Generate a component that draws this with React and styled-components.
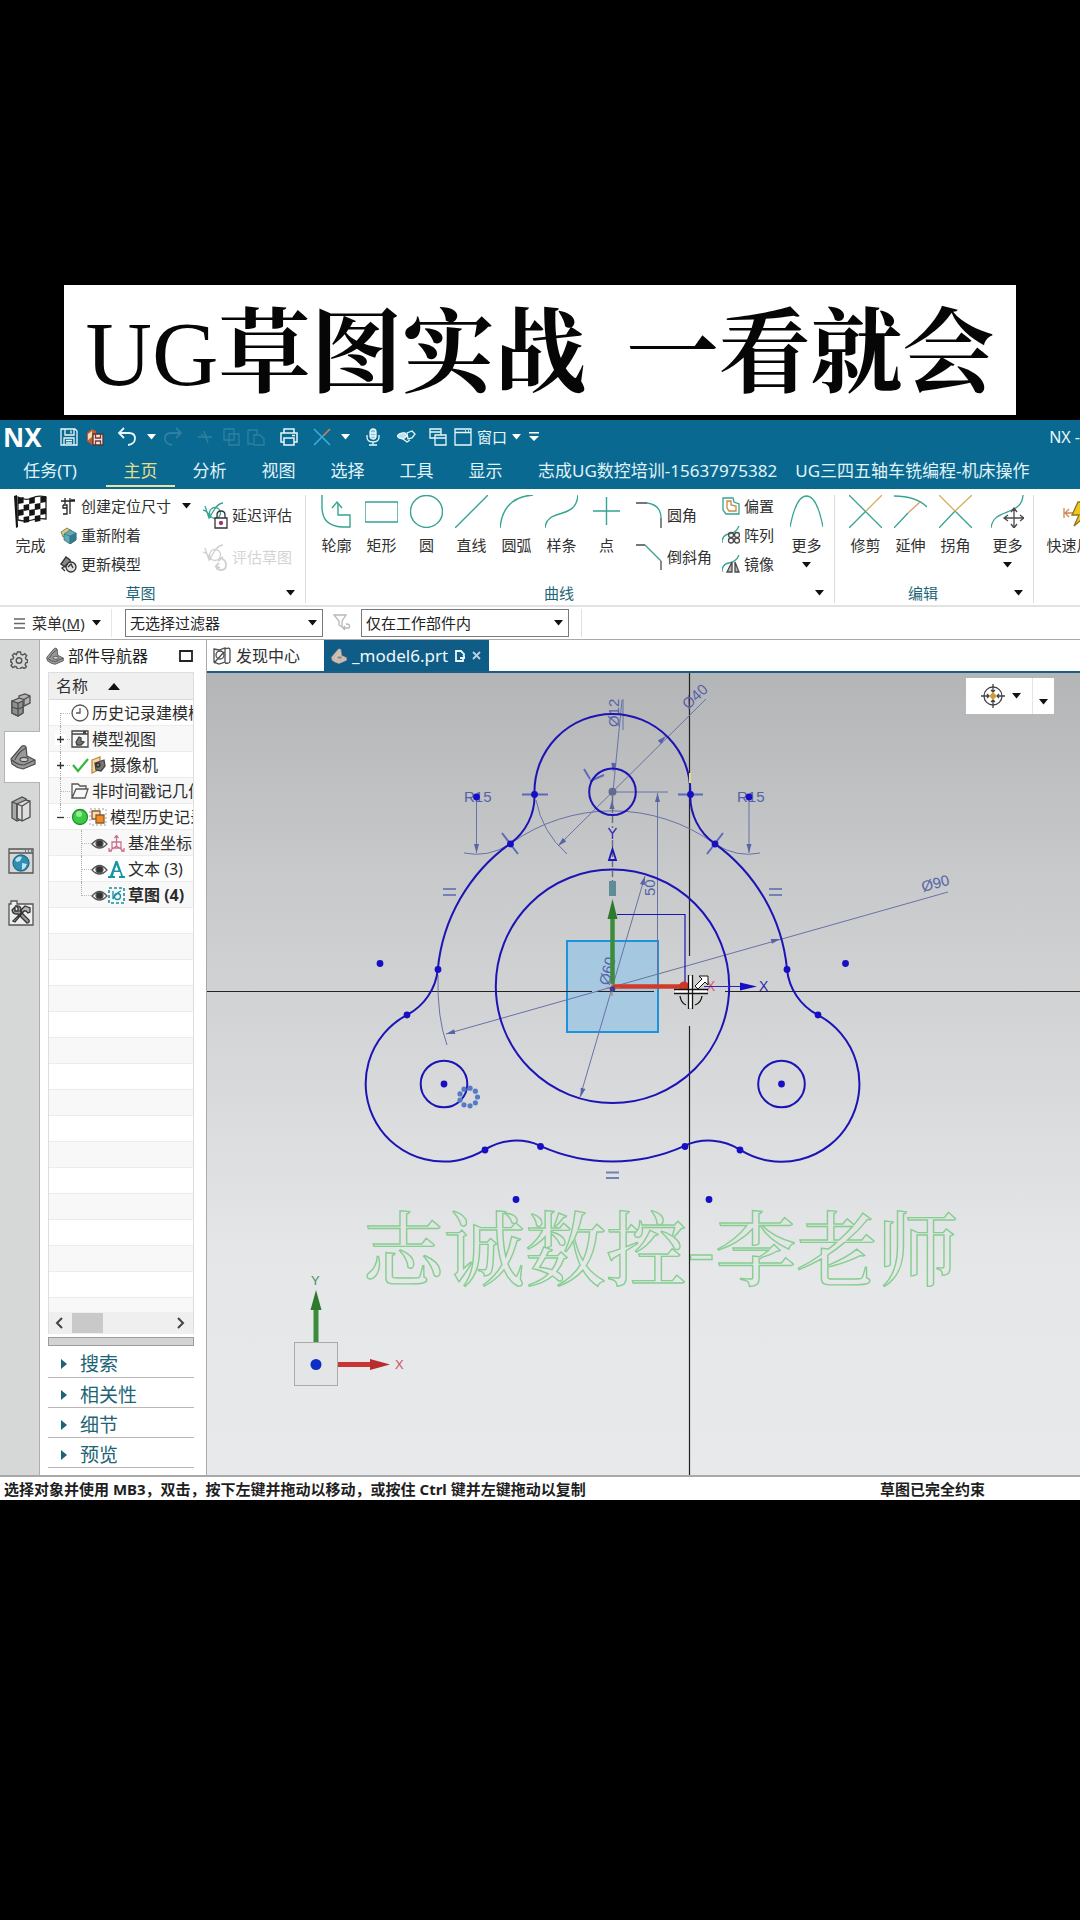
import React from "react";
import styled, { createGlobalStyle, css } from "styled-components";

const sans = `"Noto Sans", "Noto Sans CJK SC", sans-serif`;
const teal = "#1d6477";

const Global = createGlobalStyle`
  *, *::before, *::after { box-sizing: border-box; }
  html, body { margin: 0; background: #000; }
  body { font-family: ${sans}; font-size: 15px; line-height: 20px; color: #303030; }
  button, select { font: inherit; color: inherit; }
  button { margin: 0; padding: 0; border: 0; background: none; white-space: nowrap; }
  h1, h2, ul { margin: 0; padding: 0; font-weight: normal; }
  ul { list-style: none; }
  svg { display: block; flex: none; }
`;

/* ---------- page ---------- */
const Page = styled.div`
  min-height: 100vh;
  padding-top: 285px;
  background: #000;
  overflow: hidden;
`;
const Banner = styled.h1`
  display: flex;
  justify-content: center;
  align-items: center;
  gap: 40px;
  height: 130px;
  margin: 0 64px 5px;
  padding-top: 8px;
  background: #fff;
  color: #060606;
  white-space: nowrap;
  font: 700 92px/122px "Liberation Serif", "Noto Serif CJK SC", "Noto Sans CJK SC", serif;
`;
const BannerLatin = styled.span`
  font-weight: 400;
`;
const Window = styled.main`
  display: flex;
  flex-direction: column;
  background: #fff;
  overflow: hidden;
`;

/* ---------- header ---------- */
const Header = styled.header`
  height: 69px;
  background: #0a6991;
  color: #e9f7fb;
  overflow: hidden;
`;
const TitleBar = styled.div`
  display: flex;
  align-items: center;
  height: 33px;
`;
const Brand = styled.strong`
  width: 56px;
  padding-left: 3px;
  font-size: 26px;
  line-height: 32px;
  color: #fff;
`;
const QuickButton = styled.button`
  display: flex;
  justify-content: center;
  align-items: center;
  gap: 5px;
  width: ${(p) => (p.$w ? `${p.$w}px` : "auto")};
  height: 30px;
  opacity: ${(p) => (p.disabled ? 0.16 : 1)};
  color: inherit;
`;
const AppName = styled.span`
  flex: none;
  margin-left: auto;
  white-space: nowrap;
  font-size: 16px;
`;
const Tabs = styled.nav`
  display: flex;
  height: 36px;
`;
const Tab = styled.button`
  width: ${(p) => (p.$wide ? "auto" : p.$first ? "106px" : "69px")};
  padding: ${(p) => (p.$wide ? "3px 0 0 18px" : p.$first ? "3px 6px 0 0" : "3px 0 0")};
  height: 34px;
  font-size: 17px;
  line-height: 29px;
  color: ${(p) => (p.$on ? "#e6dc8c" : "#e0f3f8")};
  border-bottom: 2px solid ${(p) => (p.$on ? "#e8e4a4" : "transparent")};
`;

/* ---------- ribbon ---------- */
const Ribbon = styled.div`
  display: flex;
  height: 118px;
  padding-top: 6px;
  border-bottom: 2px solid #e2e2e2;
  overflow: hidden;
`;
const Group = styled.section`
  flex: none;
  display: flex;
  flex-direction: column;
  justify-content: space-between;
  width: ${(p) => (p.$w ? `${p.$w}px` : "auto")};
  padding-left: 8px;
  border-right: 1px solid #dcdcdc;
  margin-bottom: 2px;
`;
const Tools = styled.div`
  display: flex;
  align-items: flex-start;
`;
const Caption = styled.h2`
  position: relative;
  margin-left: -8px;
  text-align: center;
  font-size: 15px;
  line-height: 20px;
  color: ${teal};
  padding-right: ${(p) => p.$shift || 0}px;
`;
const Launcher = styled.button`
  position: absolute;
  right: 10px;
  top: 7px;
`;
const BigTool = styled.button`
  display: flex;
  flex-direction: column;
  align-items: center;
  width: 45px;
  flex: none;
  gap: 7px;
  line-height: 20px;
  margin-left: ${(p) => (p.$gap ? p.$gap : 0)}px;
`;
const Stack = styled.div`
  display: flex;
  flex-direction: column;
  flex: none;
  padding-left: ${(p) => p.$pl}px;
  padding-top: ${(p) => (p.$loose ? 10 : 1)}px;
  gap: ${(p) => (p.$loose ? 22 : 9)}px;
  width: ${(p) => p.$w}px;
`;
const SmallTool = styled.button`
  display: flex;
  align-items: center;
  gap: 4px;
  height: 20px;
  opacity: ${(p) => (p.disabled ? 0.45 : 1)};
  color: ${(p) => (p.disabled ? "#a0a0a0" : "#303030")};
  & > svg:last-child:not(:first-child) { margin-left: 7px; }
`;

/* ---------- filter bar ---------- */
const FilterBar = styled.div`
  display: flex;
  align-items: center;
  height: 33px;
  border-bottom: 1px solid #aaa;
`;
const MenuButton = styled.button`
  display: flex;
  align-items: center;
  gap: 7px;
  width: 112px;
  height: 28px;
  padding-left: 14px;
  border-right: 1px solid #e6e6e6;
`;
const Pick = styled.label`
  display: grid;
  align-items: center;
  width: ${(p) => p.$w}px;
  margin-left: ${(p) => p.$ml}px;
  & > * { grid-area: 1 / 1; }
  & > svg { justify-self: end; margin-right: 6px; pointer-events: none; }
`;
const Select = styled.select`
  appearance: none;
  width: 100%;
  height: 28px;
  padding: 0 20px 0 4px;
  border: 1px solid #7a7a7a;
  border-radius: 0;
  background: #fff;
  color: #222;
`;
const BarEnd = styled.span`
  width: 1px;
  height: 28px;
  margin-left: 12px;
  background: #e0e0e0;
`;

/* ---------- workspace ---------- */
const Workspace = styled.div`
  display: flex;
  min-height: 0;
`;
const Rail = styled.nav`
  flex: none;
  width: 40px;
  background: #d6d7d7;
  border-right: 1px solid #aeaeae;
`;
const RailButton = styled.button`
  display: flex;
  justify-content: center;
  align-items: center;
  width: 36px;
  height: ${(p) => (p.$short ? 39 : 52)}px;
  margin-left: ${(p) => (p.$short ? 1 : 4)}px;
  padding-right: ${(p) => (p.$on || p.$short ? 0 : 2)}px;
  ${(p) =>
    p.$on &&
    css`
      background: #fff;
      border: 1px solid #b5b5b5;
      border-right: 0;
    `}
`;
const Panel = styled.aside`
  flex: none;
  display: flex;
  flex-direction: column;
  width: 167px;
  padding: 0 12px 7px 8px;
  border-right: 1px solid #aaa;
  background: #fff;
`;
const PanelHead = styled.div`
  display: flex;
  align-items: center;
  gap: 4px;
  height: 32px;
  margin: 0 1px 0 -2px;
  font-size: 16px;
  color: #222;
  white-space: nowrap;
  & > svg:last-child { margin-left: auto; }
`;
const Tree = styled.div`
  display: flex;
  flex-direction: column;
  flex: 1;
  border: 1px solid #dedede;
  border-bottom: 0;
  overflow: hidden;
`;
const TreeHead = styled.button`
  display: flex;
  align-items: center;
  gap: 20px;
  height: 27px;
  padding-left: 7px;
  background: #f0f0f0;
  border-bottom: 1px solid #dadada;
  font-size: 16px;
`;
const TreeRows = styled.ul`
  flex: 1;
  background: repeating-linear-gradient(#fff 0 25px, #ececec 25px 26px, #f8f8f8 26px 51px, #ececec 51px 52px);
`;
const Row = styled.li`
  position: relative;
  display: flex;
  align-items: center;
  height: 26px;
  padding-left: ${(p) => (p.$child ? 42 : 0)}px;
  font-size: 16px;
  white-space: nowrap;
  color: #2c2c2c;
  font-weight: ${(p) => (p.$bold ? 700 : 400)};
  &::before {
    content: "";
    position: absolute;
    left: ${(p) => (p.$child ? 32 : 11)}px;
    top: ${(p) => (p.$first ? 13 : 0)}px;
    bottom: ${(p) => (p.$last ? 12 : 0)}px;
    border-left: 1px dotted #aaa;
  }
  &::after {
    content: "";
    position: absolute;
    left: ${(p) => (p.$child ? 33 : 12)}px;
    top: 13px;
    width: 9px;
    border-top: 1px dotted #bbb;
  }
  & > span { margin-left: 3px; }
`;
const Expander = styled.span`
  && { margin: 0; }
  flex: none;
  position: relative;
  z-index: 1;
  display: flex;
  justify-content: center;
  width: 22px;
`;
const ScrollBar = styled.div`
  display: flex;
  align-items: center;
  height: 22px;
  padding: 0 8px 0 6px;
  background: #efefef;
`;
const Thumb = styled.span`
  width: 31px;
  height: 20px;
  margin-left: 9px;
  margin-right: auto;
  background: #c9c9c9;
`;
const Splitter = styled.div`
  height: 9px;
  margin-top: 3px;
  border: 1px solid #9c9c9c;
  background: #d3d3d3;
`;
const Fold = styled.button`
  display: flex;
  align-items: center;
  gap: 13px;
  height: ${(p) => (p.$first ? 32 : 30)}px;
  padding: 4px 0 0 13px;
  border-bottom: 1px solid #bbb5b8;
  font-size: 19px;
  line-height: 24px;
  color: ${teal};
`;

/* ---------- graphics area ---------- */
const Graphics = styled.section`
  flex: 1;
  min-width: 0;
`;
const DocTabs = styled.div`
  display: flex;
  height: 33px;
  border-bottom: 2px solid #165f85;
`;
const DocTab = styled.button`
  display: flex;
  align-items: center;
  gap: 5px;
  width: ${(p) => (p.$on ? 165 : 117)}px;
  padding-left: ${(p) => (p.$on ? 7 : 6)}px;
  font-size: ${(p) => (p.$on ? 17 : 16)}px;
  background: ${(p) => (p.$on ? "#0f5c86" : "#fff")};
  color: ${(p) => (p.$on ? "#eef8fc" : "#303030")};
  & > svg:nth-of-type(n + 2) { margin-left: 2px; }
`;
const Canvas = styled.div`
  position: relative;
  background: linear-gradient(#b3b5b7 0%, #c7c9ca 25%, #d6d7d9 48%, #e5e7e8 74%, #e7e9ea 100%);
`;
const Drawing = styled.svg`
  width: 100%;
  height: auto;
`;
const ViewBar = styled.div`
  position: absolute;
  top: 5px;
  right: 26px;
  display: flex;
  width: 88px;
  height: 36px;
  background: #fff;
`;
const ViewButton = styled.button`
  display: flex;
  align-items: center;
  justify-content: center;
  gap: 7px;
  width: ${(p) => (p.$narrow ? 22 : 66)}px;
  padding: ${(p) => (p.$narrow ? "11px 0 0" : "0 0 0 4px")};
  border-left: ${(p) => (p.$narrow ? "1px solid #e4e4e4" : "0")};
`;
const Status = styled.footer`
  display: flex;
  align-items: center;
  justify-content: space-between;
  height: 25px;
  padding: 0 95px 0 4px;
  border-top: 2px solid #a9a9a9;
  font-size: 15px;
  font-weight: 700;
  color: #1e1e1e;
  white-space: nowrap;
`;

/* ---------- icons ---------- */
const Ic = ({ w = 18, h = w, box, sw = 1.3, c = "currentColor", f = "none", children }) => (
  <svg width={w} height={h} viewBox={box || `0 0 ${w} ${h}`} fill={f} stroke={c} strokeWidth={sw} aria-hidden="true">
    {children}
  </svg>
);
const Caret = ({ c = "#111" }) => (
  <Ic w={9} h={6} c="none" f={c}><path d="M0 0h9L4.500 5.500z" /></Ic>
);
const Green = "#36a393";
const Dark = "#4a4a4a";

const SaveIcon = () => (
  <Ic w={18}><path d="M1 1h14l2 2v14H1z M5 1v6h9V1 M11 2.500v3 M4 17v-7h10v7 M6 12.500h6M6 15h6" /></Ic>
);
const SaveModelIcon = () => (
  <Ic w={18} c="none">
    <path d="M1 5l5-4 4 2v13l-4 1-5-4z" fill="#c65d2d" /><path d="M2 6l4-3v6l-4 3z" fill="#f3d9bd" />
    <path d="M7 6h10v11H7z" fill="#f5e3e0" stroke="#4b3a3a" /><path d="M9.500 6v4h5V6M9.500 17v-4h5v4" stroke="#803434" fill="none" />
  </Ic>
);
const UndoIcon = ({ flip }) => (
  <Ic w={20} sw={1.8}><g transform={flip ? "matrix(-1 0 0 1 20 0)" : undefined}><path d="M7 1L2 6l5 5M2 6h10q6 0 6 5.500T11 18" /></g></Ic>
);
const CutIcon = () => <Ic w={16}><path d="M1 8h14M7 2l4 12M4 5l6 5" /></Ic>;
const CopyIcon = () => <Ic w={18}><path d="M1 1h10v11H1zM6 6h10v11H6z" /></Ic>;
const PasteIcon = () => <Ic w={18}><path d="M1 2h9v4M1 2v14h5M7 7h6l4 4v6H7z" /></Ic>;
const PrintIcon = () => (
  <Ic w={18} sw={1.5}><path d="M4 5V1h10v4M4 14H1V5h16v9h-3M4 10h10v7H4zM12 7.500h3" /></Ic>
);
const CrossIcon = () => (
  <Ic w={18} c="none" sw={1.6}><path d="M1 1l16 16M1 17l9-9" stroke="#35b0dc" /><path d="M10 8l7-7" stroke="#d0825a" /></Ic>
);
const MicIcon = () => (
  <Ic w={14} h={18}><rect x="4" y="1" width="6" height="10" rx="3" fill="#8cc3d6" /><path d="M1 7v2q0 5 6 5t6-5V7M7 14v3M3 17h8M4 5h6M4 8h6" /></Ic>
);
const TouchIcon = () => (
  <Ic w={19} h={14}><path d="M0 6q3-4 8-3l2 3-4 3-4-1z" fill="#b9dfeb" /><path d="M10 3l5-2 3 3-3 4-4 1zM6 9l4 3 3-2" /></Ic>
);
const WindowsIcon = () => (
  <Ic w={18}><path d="M1 1h11v9H1zM1 4h11" /><path d="M6 7h11v10H6zM6 10h11" fill="#0a6991" /></Ic>
);
const WindowIcon = () => <Ic w={18}><path d="M1 1h16v16H1zM1 4.500h16M11 2.800h1M14 2.800h1" /></Ic>;
const CaretBar = () => <Ic w={10} h={10} c="none" f="#fff"><path d="M0 0h10v1.500H0zM0 4h10l-5 5z" /></Ic>;

const FlagIcon = () => {
  const cells = [];
  for (let r = 0; r < 4; r++)
    for (let c = 0; c < 5; c++)
      if ((r + c) % 2 === 0) {
        const x = 4 + c * 5.6;
        const y = 3 + r * 6 + (c % 2 ? 1 : 0) - (c > 2 ? 1 : 0);
        cells.push(<path key={`${r}${c}`} d={`M${x} ${y}l5.600-1v6l-5.600 1z`} />);
      }
  return (
    <Ic w={33} h={33} c="none" f="#151515">
      <path d="M4 2q8 4 14 1t14-1v22q-8-1-14 1t-14 0z" fill="#fff" stroke="#222" />
      {cells}
      <path d="M0 1l3-1 1 32-2 1z" />
    </Ic>
  );
};
const DimIcon = () => (
  <Ic w={17} c="#222"><path d="M1 3h14M5 0v6M10 0v16M3 7v3h4M3 7h4v9H3M11 2h4" /></Ic>
);
const CubeIcon = () => (
  <Ic w={17} c="#44717b" sw={0.8}><path d="M1 5l6-4 5 3-1 3-8 3z" fill="#f0c66b" /><path d="M4 7l6-4 6 3v7l-6 4-6-4z" fill="#5aaebb" /><path d="M10 9l6-3v7l-6 4z" fill="#2d7c90" /><path d="M4 7l6 2v8" /></Ic>
);
const UpdateIcon = () => (
  <Ic w={17} c="#333"><path d="M1 8l5-7 4 3 1 4-6 3z" fill="#888" /><circle cx="11" cy="11" r="5" fill="#ddd" /><path d="M8 11l3-3 2 4M8 8l-6 4 3 3" /></Ic>
);
const DelayIcon = ({ lock }) => (
  <Ic w={25} h={27} c={lock ? Green : "#999"}>
    <path d="M2 4l4 12 7-11q4-4 7-4M0 8q5 1 8 8" /><circle cx="12" cy="11" r="5.500" />
    {lock ? (
      <g stroke="#333"><path d="M12 16h12v10H12z" fill="#fff" /><path d="M14 16v-3q0-4 4-4t4 4v3" /><circle cx="18" cy="21" r="1.500" fill="#a3366b" stroke="#a3366b" /></g>
    ) : (
      <path d="M13 22q0 4 5 4t5-5-4-6M16 19l-3 3 4 2M15 17l5-4" strokeWidth="1.800" />
    )}
  </Ic>
);
const curveIcons = {
  轮廓: <><path d="M2 0v12q0 19 20 20h8V20H18V8" /><path d="M12 13l5-6 5 6" /></>,
  矩形: <path d="M0 7h33v20H0z" />,
  圆: <circle cx="16.500" cy="16.500" r="16" />,
  直线: <path d="M0 33L33 0" />,
  圆弧: <path d="M0 33Q3 2 33 0" />,
  样条: <path d="M0 33C2 12 31 26 33 0" />,
  点: <path d="M16.500 2v28M3 16h27" />,
};
const FilletIcon = ({ cut }) => (
  <Ic w={27} h={27}><path d={cut ? "M9 1l16 16" : "M11 1q14 2 14 15"} stroke={Green} /><path d={cut ? "M0 1h9M25 17v9" : "M0 1h11M25 16v10"} stroke={Dark} /></Ic>
);
const OffsetIcon = () => (
  <Ic w={18} c={Green}><path d="M1 1h10l1 4 5 2v10H4l-3-4z" /><path d="M5 4h4v4l5 1v5H7l-2-3z" stroke="#c78a43" /></Ic>
);
const ArrayIcon = () => (
  <Ic w={18} c={Green}><path d="M0 17q0-8 7-9t10-8" /><g stroke={Dark}><circle cx="9" cy="9" r="2.500" /><circle cx="15" cy="9" r="2.500" /><circle cx="9" cy="14.500" r="2.500" /><circle cx="15" cy="14.500" r="2.500" /></g></Ic>
);
const MirrorIcon = () => (
  <Ic w={18} c={Green}><path d="M0 17q0-8 7-9t10-8" /><g stroke={Dark}><path d="M10 7v10H5zM13 7v10h4z" fill="#bbb" /></g></Ic>
);
const MoreCurve = () => <Ic w={33} c={Green}><path d="M0 32Q6 1 16.500 1T33 32" /></Ic>;
const TrimIcon = () => <Ic w={33}><path d="M0 0l33 33M0 33l17-17" stroke={Green} /><path d="M17 16L33 0" stroke="#d7ac5c" /></Ic>;
const ExtendIcon = () => <Ic w={33}><path d="M0 1q22 0 33 11M0 33l14-15" stroke={Green} /><path d="M14 18L26 7" stroke="#e0976e" /></Ic>;
const CornerIcon = () => <Ic w={33}><path d="M16 16l17 17M0 33l16-17" stroke={Green} /><path d="M0 0l16 16L33 0" stroke="#d7ac5c" /></Ic>;
const MoreEdit = () => (
  <Ic w={33}><path d="M0 33C2 12 31 22 32 0" stroke={Green} /><path d="M23 14v18M13 23h20M20 17l3-4 3 4M20 29l3 4 3-4M17 20l-4 3 4 3M29 20l4 3-4 3" stroke={Dark} /></Ic>
);
const FastIcon = () => (
  <Ic w={33}><path d="M4 13v10M5 18h10M9 14l-4 4 4 4" stroke="#d28652" /><path d="M18 7h13l-5 8h7L14 31l5-11h-7z" fill="#f2c51c" stroke="#8b7425" /></Ic>
);
const MenuIcon = () => <Ic w={11} h={11} c="#666"><path d="M0 1h11M0 5.500h11M0 10h11" /></Ic>;
const FunnelIcon = () => <Ic w={18} c="#b8b8b8"><path d="M1 1h12L9 7v6l-3-2V7zM10 14h6q2-4-3-4M12 12l-2 2 2 2" /></Ic>;

const GearIcon = () => (
  <Ic w={18} c="#555" sw={1.4}>
    <path d="M7.500 1h3l.5 2.300 1.700.7 2-1.300 2 2-1.300 2 .7 1.700 1.400.5v2.500l-1.700.5-.7 1.700 1.300 2-2 2-2-1.300-1.700.7-.5 1h-3l-.5-2-1.700-.7-2 1.300-2-2 1.300-2-.7-1.700L.8 11V8.500L3 8l.7-1.700-1.300-2 2-2 2 1.300z" />
    <circle cx="9" cy="9.500" r="2.800" />
  </Ic>
);
const BlocksIcon = () => (
  <Ic w={20} h={24} c="#4e4e4e">
    <path d="M1 8l7-3V3l6-2 5 2v7l-6 3-1 0v7l-5 3-6-3z" fill="#b4b4b4" />
    <path d="M1 8l6 2 5-2v12l-5 3-6-3z" fill="#8f8f8f" />
    <path d="M7 10v13M1 14l6 2 5-2M8 5l5 1.500L19 3M13 6.500V13" />
  </Ic>
);
const PartIcon = ({ w = 26, light }) => (
  <svg width={w} height={w} viewBox="0 0 26 26" fill={light ? "#d9c3b5" : "#999"} stroke={light ? "#b7a79c" : "#4c4c4c"} strokeWidth="1.200" aria-hidden="true">
    <path d="M1 15L12 2q3-1 4 1l1 9 8 4v4l-12 5q-6-1-11-5z" /><path d="M2 16q5 5 12 5l11-5M16 4Q8 8 5 16" fill="none" /><ellipse cx="14" cy="15.500" rx="4" ry="2.200" fill={light ? "#6f93a8" : "#ccc"} />
  </svg>
);
const BooksIcon = () => (
  <Ic w={20} h={26} c="#4e4e4e"><path d="M1 6l10-5 4 2v18l-9 4-5-3z" fill="#a9a9a9" /><path d="M6 8l9-4 4 1v16l-8 4-5-3z" fill="#dedede" /><path d="M6 8l5 2 8-5M11 10v15M1 6l5 2v16" /></Ic>
);
const WebIcon = () => (
  <Ic w={26} c="#555"><path d="M1 1h24v24H1zM1 5h24M17 3h1M20 3h1M23 3h1" /><circle cx="13" cy="15" r="8" fill="#2f8eb4" stroke="#276c89" /><path d="M7 12q3-5 7-3l-2 4-3 1zM14 15l5 1-2 4-3 2zM16 9l3 3" fill="#bfe4ee" stroke="none" /></Ic>
);
const ToolsIcon = () => (
  <Ic w={26} c="#555">
    <path d="M1 25V4h2V1h6v3h16v21z" fill="#eee" />
    <path d="M4 10l3-3v4h3V8L8 6q5-1 5 4l-1 1 9 9q1 3-2 3l-9-9q-5 1-6-4z" fill="#999" stroke="#333" sw="1" />
    <path d="M5 21l9-9-1-2 4-4 5 2v4l-2 1-2-2-2 0-9 11z" fill="#b5b5b5" stroke="#333" />
  </Ic>
);
const ClockIcon = () => <Ic w={18} c="#555"><circle cx="9" cy="9" r="8" /><path d="M9 4v5H5" /></Ic>;
const ViewsIcon = () => <Ic w={18} c="#444"><path d="M1 1h16v16H1zM1 4h16M12 2.500h3" /><path d="M5 12l3-5 2 1v3l3 1-3 3H6z" fill="#777" /></Ic>;
const CheckIcon = () => <Ic w={18} c="#35b53c" sw={2.2}><path d="M2 9l5 6L17 3" /></Ic>;
const CameraIcon = () => <Ic w={18} c="#c5873d"><path d="M3 4l8-3v12l-8 4z" fill="#f5d9aa" /><path d="M6 7l9-3 1 6-4 5-5-1z" fill="#777" stroke="#444" /><circle cx="9" cy="9" r="2" stroke="#333" /></Ic>;
const FolderIcon = () => <Ic w={18} c="#555"><path d="M1 16V2h6l2 2h6v3M1 16L5 7h12l-3 9z" /></Ic>;
const BallIcon = () => <Ic w={18} c="#2c8b31"><circle cx="9" cy="9" r="7.500" fill="#3bcb45" /><circle cx="8" cy="6" r="3" fill="#91ec92" stroke="none" /></Ic>;
const HistoryIcon = () => <Ic w={18} c="#8c5a30"><path d="M1 1h16v16H1z" stroke="#bbb" strokeDasharray="2 2" /><path d="M3 3h8v8H3z" fill="#f7dcb7" /><path d="M7 7h8v8H7z" fill="#ef8c22" /></Ic>;
const EyeIcon = () => <Ic w={17} c="#555"><path d="M1 9q7.500-9 15 0-7.500 8-15 0z" /><circle cx="8.500" cy="8.500" r="3.500" fill="#333" /></Ic>;
const DatumIcon = () => <Ic w={17} c="#c9718c"><path d="M8.500 1v10l-7 5M8.500 11l7 5M4 7h9v6H4z" /><path d="M6.500 3l2-2.500 2 2.500M1 13v3h3M16 13v3h-3" /></Ic>;
const LetterIcon = () => <Ic w={17} c="none" f="#1295a6"><path d="M7.500 0h2l5.500 15h2v2h-6v-2h2l-1-4H6l-1 4h2v2H0v-2h2zM8.500 4L6.500 9.500h4z" /></Ic>;
const SketchIcon = () => <Ic w={17} c="#178e9d"><path d="M1 1h15v15H1z" strokeDasharray="3 2" strokeWidth="1.600" /><path d="M5 4v8q3-6 8-8" /><circle cx="9.500" cy="9.500" r="3" /></Ic>;
const MapIcon = () => <Ic w={18} c="#4d4d4d"><path d="M1 2l5 1 6-2v14l-6 2-5-2zM12 2q5-2 5 1v11q0 3-5 2M1 16L11 5" /><circle cx="7" cy="8" r="4" /></Ic>;
const DocEdit = () => <Ic w={10} h={12} c="#e9f7fb" sw={1.8}><path d="M9 5V4L6 1H1v10h7V9M5 8h5M8 5l2 2" /></Ic>;
const CloseIcon = () => <Ic w={9} c="#b9d2df" sw={1.8}><path d="M1 1l7 7M8 1L1 8" /></Ic>;
const TargetIcon = () => (
  <Ic w={24} c="#444"><circle cx="12" cy="12" r="9" /><path d="M12 0v8M12 16v8M0 12h8M16 12h8M10 6l2 2 2-2M10 18l2-2 2 2M6 10l2 2-2 2M18 10l-2 2 2 2" /><path d="M12 9l3 3-3 3-3-3z" fill="#d49b3e" stroke="#d49b3e" /></Ic>
);

/* ---------- sketch ---------- */
const profile =
  "M534.500 794.500A77.800 77.800 0 0 1 612.400 714A77.800 77.800 0 0 1 690.300 794.500A58.300 58.300 0 0 0 714.700 843.600" +
  "A175 175 0 0 1 787 969.300A58.300 58.300 0 0 0 817.700 1014.900A77.800 77.800 0 0 1 848.900 1122.900A77.800 77.800 0 0 1 739.900 1149.700" +
  "A58.300 58.300 0 0 0 684.600 1145.800A175 175 0 0 1 540.200 1145.800A58.300 58.300 0 0 0 484.900 1149.700" +
  "A77.800 77.800 0 0 1 376.300 1122.900A77.800 77.800 0 0 1 407.100 1014.900A58.300 58.300 0 0 0 437.800 969.300A175 175 0 0 1 510.100 843.600" +
  "A58.300 58.300 0 0 0 534.500 794.500Z";
const points = [
  [534.5, 794.5], [690.5, 794.5], [510.5, 844], [715, 844], [438, 969.5], [787, 969.5],
  [407, 1015], [818, 1015], [485, 1150], [540.5, 1146.5], [685, 1146.5], [740, 1150],
  [380, 963.5], [845.5, 963.5], [516, 1199.5], [709, 1199.5], [444, 1084], [781.5, 1084],
  [476.5, 797], [749, 797],
];
const dims = [
  ["Ø12", 619, 727, -90], ["Ø40", 688, 710, -43], ["50", 655, 896, -90],
  ["Ø90", 923, 892, -15], ["Ø60", 609, 986, -76], ["R15", 464, 802, 0], ["R15", 737, 802, 0],
];
const heads = [
  [613, 772, 95], [666, 736, -44], [558, 846, 136], [657.5, 793, -90], [645, 876, -73],
  [580.5, 1097, 107], [780, 939, -15], [446, 1034, 165], [476.5, 853, 90], [749, 853, 90], [612, 800, -90],
];

function Sketch() {
  return (
    <Drawing viewBox="207 673 873 802" role="img" aria-label="sketch" fontFamily='"Liberation Sans", sans-serif'>
      <text x="363" y="1279" fontSize="81" fontWeight="500" fill="none" stroke="#87cf91" strokeWidth="1.400" fontFamily='"Noto Serif CJK SC", "Noto Sans CJK SC", sans-serif'>
        志诚数控-李老师
      </text>
      <rect x="567" y="941" width="91" height="91" fill="#8cc4ea" fillOpacity="0.620" stroke="#1d93dc" strokeWidth="2" />
      <g stroke="#222" strokeWidth="1.200">
        <path d="M689.500 673V956M689.500 1026V1475M207 991.500H592M596 991.500H654M725 991.500H1080" />
      </g>
      <g fill="none" stroke="#6972a6" strokeWidth="1">
        <path d="M622 700L613 792M623 699V730M706 699L558 846M536 800Q542 832 567 854M612 792H668M657.500 793V985" />
        <path d="M476.500 799V853M464 853Q488 858 510 844M749 799V853M760 853Q737 858 715 844" />
        <path d="M510 844A175 175 0 0 1 715 844M446 1034L948 892M438 975Q437 1018 447 1045M645 876L580 1097" />
      </g>
      <g fill="#5963a8">
        {heads.map(([x, y, a], i) => <path key={i} transform={`translate(${x} ${y}) rotate(${a})`} d="M0 0L-9 -2.500V2.500Z" />)}
      </g>
      <g fill="#5563a8" fontSize="15">
        {dims.map(([t, x, y, a], i) => <text key={i} transform={`translate(${x} ${y}) rotate(${a})`}>{t}</text>)}
      </g>
      <g stroke="#7580b4" strokeWidth="2">
        <path d="M443 889H456M443 895H456M769 889H782M769 895H782M606 1172.500H619M606 1178H619" />
        <path d="M522 794.500H548M678 794.500H703M502 833L518 854M723 833L707 854M584 769L590 779M590 781L604 775" stroke="#5d6bb5" />
      </g>
      <g fill="none" stroke="#1c14b4" strokeWidth="2">
        <path d={profile} />
        <circle cx="612.500" cy="986.300" r="116.700" />
        <circle cx="612.500" cy="791.700" r="23.300" />
        <circle cx="444" cy="1084" r="23.300" />
        <circle cx="781.500" cy="1084" r="23.300" />
        <path d="M617 914.500H685V984" strokeWidth="1.200" />
      </g>
      <g fill="#160fc4">{points.map(([x, y]) => <circle key={`${x}-${y}`} cx={x} cy={y} r="3.400" />)}</g>
      <circle cx="612.500" cy="791.700" r="4" fill="#636a92" />
      <path d="M690 773v10" stroke="#e3dc77" strokeWidth="2" />
      <path d="M612.500 796V828M612.500 840V884" stroke="#666b84" strokeDasharray="7 3" strokeWidth="1.400" />
      <path d="M609 860L612.500 849L616 860Z" fill="none" stroke="#1c14b4" strokeWidth="1.800" />
      <path d="M608.500 828L612.500 833.500L616.500 828M612.500 833.500V839" fill="none" stroke="#3a35b5" strokeWidth="1.400" />
      <rect x="609" y="881" width="7" height="15" fill="#5f8c96" />
      <path d="M612.500 984V915" stroke="#3c8c3c" strokeWidth="4.500" />
      <path d="M607.500 919L612.500 899L617.500 919Z" fill="#2d7a2d" />
      <path d="M612.500 986.500H680" stroke="#d13a2a" strokeWidth="4.500" />
      <circle cx="684" cy="986.500" r="5" fill="#cf3628" />
      <path d="M606 988h14M612 983v13" stroke="#c0703b" /><circle cx="612.500" cy="989" r="2.800" fill="#3d3d9a" />
      <text x="706" y="991" fontSize="14" fill="#e05b5b">X</text>
      <path d="M704 986.500H745" stroke="#2a24b8" />
      <path d="M740 982.500L757 986.500L740 990.500Z" fill="#160fc4" />
      <text x="759" y="991" fontSize="14" fill="#2a2aa8">X</text>
      <path d="M690.500 976V1008M675 991.500H707" fill="none" stroke="#fff" strokeWidth="4" />
      <g fill="none" stroke="#151515" strokeWidth="1.300">
        <path d="M688.500 975V1009M692.500 975V1009M674 989.500H708M674 993.500H708" />
        <path d="M680 996Q681 1003 686 1005M702 996Q701 1003 695 1005" />
        <path d="M695 986L702 979L699 976H708V985L705 982L698 989Z" fill="#fff" strokeWidth="1" />
      </g>
      <g fill="#567bc4">
        {[0, 1, 2, 3, 4, 5, 6, 7, 8].map((i) => {
          const a = (i * 40 * Math.PI) / 180;
          return <circle key={i} cx={468.5 + 9 * Math.cos(a)} cy={1097 + 9 * Math.sin(a)} r="2.600" />;
        })}
      </g>
      <rect x="294.500" y="1342.500" width="43" height="43" fill="#e4e5e7" stroke="#aaa" />
      <circle cx="316" cy="1364.500" r="5.500" fill="#0f2ec4" />
      <path d="M316 1342V1308" stroke="#3c8c3c" strokeWidth="5" />
      <path d="M310.500 1310L316 1290L321.500 1310Z" fill="#2d7a2d" />
      <path d="M338 1364.500H372" stroke="#c93434" strokeWidth="5" />
      <path d="M370 1359L390 1364.500L370 1370Z" fill="#b72c2c" />
      <text x="311" y="1285" fontSize="13" fill="#4b8f62">Y</text>
      <text x="395" y="1369" fontSize="13" fill="#cf5266">X</text>
    </Drawing>
  );
}

const Plus = ({ minus }) => (
  <Ic w={11} c="#333"><path d="M0 0h11v11H0z" fill="#fff" stroke="none" /><path d={minus ? "M2 5.500h7" : "M2 5.500h7M5.500 2v7"} /></Ic>
);
const treeRows = [
  { label: "历史记录建模模式", icons: [ClockIcon], first: true },
  { label: "模型视图", icons: [ViewsIcon], exp: "+" },
  { label: "摄像机", icons: [CheckIcon, CameraIcon], exp: "+" },
  { label: "非时间戳记几何体", icons: [FolderIcon] },
  { label: "模型历史记录", icons: [BallIcon, HistoryIcon], exp: "-", last: true },
  { label: "基准坐标系", icons: [EyeIcon, DatumIcon], child: true },
  { label: "文本 (3)", icons: [EyeIcon, LetterIcon], child: true },
  { label: "草图 (4)", icons: [EyeIcon, SketchIcon], child: true, last: true, bold: true },
];

const Big = ({ label, children, caret, gap }) => (
  <BigTool type="button" $gap={gap}>{children}<span>{label}</span>{caret && <Caret />}</BigTool>
);
const GroupCaption = ({ children, shift }) => (
  <Caption $shift={shift}>{children}<Launcher type="button" aria-label="more options"><Caret /></Launcher></Caption>
);

export default function App() {
  return (
    <Page>
      <Global />
      <Banner><span><BannerLatin>UG</BannerLatin>草图实战</span><span>一看就会</span></Banner>
      <Window>
        <Header>
          <TitleBar>
            <Brand>NX</Brand>
            <QuickButton $w={26} aria-label="save"><SaveIcon /></QuickButton>
            <QuickButton $w={26} aria-label="save model"><SaveModelIcon /></QuickButton>
            <QuickButton $w={38} aria-label="undo"><UndoIcon /></QuickButton>
            <QuickButton $w={10} aria-label="undo list"><Caret c="#fff" /></QuickButton>
            <QuickButton $w={34} aria-label="redo" disabled><UndoIcon flip /></QuickButton>
            <QuickButton $w={30} aria-label="cut" disabled><CutIcon /></QuickButton>
            <QuickButton $w={24} aria-label="copy" disabled><CopyIcon /></QuickButton>
            <QuickButton $w={24} aria-label="paste" disabled><PasteIcon /></QuickButton>
            <QuickButton $w={42} aria-label="print"><PrintIcon /></QuickButton>
            <QuickButton $w={24} aria-label="trim"><CrossIcon /></QuickButton>
            <QuickButton $w={22} aria-label="trim list"><Caret c="#fff" /></QuickButton>
            <QuickButton $w={34} aria-label="voice"><MicIcon /></QuickButton>
            <QuickButton $w={32} aria-label="touch"><TouchIcon /></QuickButton>
            <QuickButton $w={32} aria-label="windows"><WindowsIcon /></QuickButton>
            <QuickButton><WindowIcon />窗口<Caret c="#fff" /></QuickButton>
            <QuickButton $w={26} aria-label="customize"><CaretBar /></QuickButton>
            <AppName>NX -</AppName>
          </TitleBar>
          <Tabs>
            <Tab $first>任务(T)</Tab>
            <Tab $on>主页</Tab>
            {["分析", "视图", "选择", "工具", "显示"].map((t) => <Tab key={t}>{t}</Tab>)}
            <Tab $wide>志成UG数控培训-15637975382</Tab>
            <Tab $wide>UG三四五轴车铣编程-机床操作</Tab>
          </Tabs>
        </Header>

        <Ribbon>
          <Group $w={306}>
            <Tools>
              <Big label="完成"><FlagIcon /></Big>
              <Stack $pl={7} $w={142}>
                <SmallTool><DimIcon />创建定位尺寸<Caret /></SmallTool>
                <SmallTool><CubeIcon />重新附着</SmallTool>
                <SmallTool><UpdateIcon />更新模型</SmallTool>
              </Stack>
              <Stack $pl={8} $w={100} $loose>
                <SmallTool><DelayIcon lock />延迟评估</SmallTool>
                <SmallTool disabled><DelayIcon />评估草图</SmallTool>
              </Stack>
            </Tools>
            <GroupCaption shift={24}>草图</GroupCaption>
          </Group>
          <Group $w={529}>
            <Tools>
              {Object.entries(curveIcons).map(([label, art]) => (
                <Big key={label} label={label}><Ic w={33} c={Green} sw={1.4}>{art}</Ic></Big>
              ))}
              <Stack $pl={7} $w={93} $loose>
                <SmallTool><FilletIcon />圆角</SmallTool>
                <SmallTool><FilletIcon cut />倒斜角</SmallTool>
              </Stack>
              <Stack $pl={0} $w={62}>
                <SmallTool><OffsetIcon />偏置</SmallTool>
                <SmallTool><ArrayIcon />阵列</SmallTool>
                <SmallTool><MirrorIcon />镜像</SmallTool>
              </Stack>
              <Big label="更多" caret><MoreCurve /></Big>
            </Tools>
            <GroupCaption shift={22}>曲线</GroupCaption>
          </Group>
          <Group $w={199}>
            <Tools>
              <Big label="修剪"><TrimIcon /></Big>
              <Big label="延伸"><ExtendIcon /></Big>
              <Big label="拐角"><CornerIcon /></Big>
              <Big label="更多" caret gap={7}><MoreEdit /></Big>
            </Tools>
            <GroupCaption shift={22}>编辑</GroupCaption>
          </Group>
          <Group>
            <Tools><Big label="快速尺寸" gap={12}><FastIcon /></Big></Tools>
          </Group>
        </Ribbon>

        <FilterBar>
          <MenuButton><MenuIcon /><span>菜单(<u>M</u>)</span><Caret /></MenuButton>
          <Pick $w={198} $ml={13}>
            <Select aria-label="选择过滤器" defaultValue="a"><option value="a">无选择过滤器</option></Select><Caret />
          </Pick>
          <Pick as="span" $w={30} $ml={4}><FunnelIcon /></Pick>
          <Pick $w={208} $ml={4}>
            <Select aria-label="选择范围" defaultValue="a"><option value="a">仅在工作部件内</option></Select><Caret />
          </Pick>
          <BarEnd />
        </FilterBar>

        <Workspace>
          <Rail>
            <RailButton $short aria-label="settings"><GearIcon /></RailButton>
            <RailButton aria-label="assembly"><BlocksIcon /></RailButton>
            <RailButton $on aria-label="part navigator"><PartIcon /></RailButton>
            <RailButton aria-label="library"><BooksIcon /></RailButton>
            <RailButton aria-label="web"><WebIcon /></RailButton>
            <RailButton aria-label="tools"><ToolsIcon /></RailButton>
          </Rail>
          <Panel>
            <PanelHead><PartIcon w={18} /><span>部件导航器</span><Ic w={14} h={12} c="#222" sw={1.8}><path d="M1 1h12v10H1z" /></Ic></PanelHead>
            <Tree>
              <TreeHead>名称<Ic w={12} h={7} c="none" f="#111"><path d="M0 7h12L6 0z" /></Ic></TreeHead>
              <TreeRows>
                {treeRows.map((r) => (
                  <Row key={r.label} $child={r.child} $first={r.first} $last={r.last} $bold={r.bold}>
                    {!r.child && <Expander>{r.exp && <Plus minus={r.exp === "-"} />}</Expander>}
                    {r.icons.map((I, i) => <I key={i} />)}
                    <span>{r.label}</span>
                  </Row>
                ))}
              </TreeRows>
              <ScrollBar>
                <Ic w={8} h={12} c="#444" sw={2}><path d="M7 1L2 6l5 5" /></Ic><Thumb />
                <Ic w={8} h={12} c="#444" sw={2}><path d="M1 1l5 5-5 5" /></Ic>
              </ScrollBar>
            </Tree>
            <Splitter />
            {["搜索", "相关性", "细节", "预览"].map((t, i) => (
              <Fold key={t} $first={i === 0}><Ic w={6} h={10} c="none" f={teal}><path d="M0 0v10l6-5z" /></Ic>{t}</Fold>
            ))}
          </Panel>
          <Graphics>
            <DocTabs>
              <DocTab><MapIcon />发现中心</DocTab>
              <DocTab $on><PartIcon w={16} light />_model6.prt<DocEdit /><CloseIcon /></DocTab>
            </DocTabs>
            <Canvas>
              <Sketch />
              <ViewBar>
                <ViewButton aria-label="orient view"><TargetIcon /><Caret /></ViewButton>
                <ViewButton $narrow aria-label="view options"><Caret /></ViewButton>
              </ViewBar>
            </Canvas>
          </Graphics>
        </Workspace>
        <Status>
          <span>选择对象并使用 MB3，双击，按下左键并拖动以移动，或按住 Ctrl 键并左键拖动以复制</span>
          <span>草图已完全约束</span>
        </Status>
      </Window>
    </Page>
  );
}
